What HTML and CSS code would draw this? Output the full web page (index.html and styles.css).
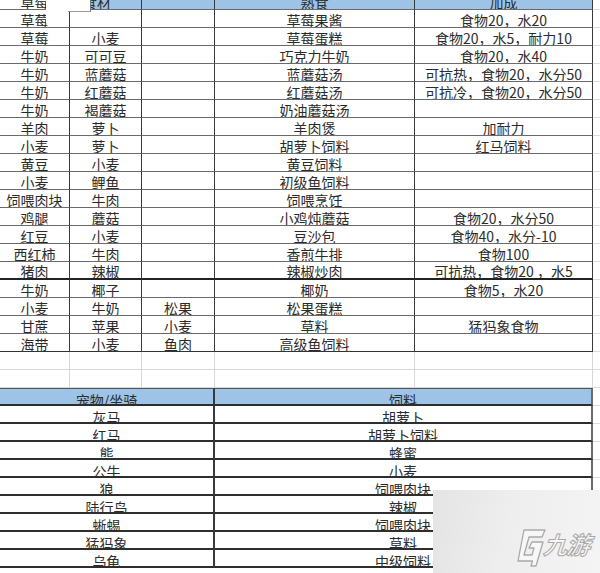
FILE: index.html
```html
<!DOCTYPE html>
<html lang="zh-CN">
<head>
<meta charset="utf-8">
<title>食材表</title>
<link rel="stylesheet" href="styles.css">
</head>
<body>
<div class="sheet">
  <div class="c">草莓</div><div class="c h hl">食材</div><div class="c h"></div><div class="c h">熟食</div><div class="c h">加成</div><div class="c x"></div>

  <div class="c">草莓</div><div class="c"></div><div class="c"></div><div class="c">草莓果酱</div><div class="c">食物20，水20</div><div class="c x"></div>
  <div class="c">草莓</div><div class="c">小麦</div><div class="c"></div><div class="c">草莓蛋糕</div><div class="c">食物20，水5，耐力10</div><div class="c x"></div>
  <div class="c">牛奶</div><div class="c">可可豆</div><div class="c"></div><div class="c">巧克力牛奶</div><div class="c">食物20，水40</div><div class="c x"></div>
  <div class="c">牛奶</div><div class="c">蓝蘑菇</div><div class="c"></div><div class="c">蓝蘑菇汤</div><div class="c">可抗热，食物20，水分50</div><div class="c x"></div>
  <div class="c">牛奶</div><div class="c">红蘑菇</div><div class="c"></div><div class="c">红蘑菇汤</div><div class="c">可抗冷，食物20，水分50</div><div class="c x"></div>
  <div class="c">牛奶</div><div class="c">褐蘑菇</div><div class="c"></div><div class="c">奶油蘑菇汤</div><div class="c"></div><div class="c x"></div>
  <div class="c">羊肉</div><div class="c">萝卜</div><div class="c"></div><div class="c">羊肉煲</div><div class="c">加耐力</div><div class="c x"></div>
  <div class="c">小麦</div><div class="c">萝卜</div><div class="c"></div><div class="c">胡萝卜饲料</div><div class="c">红马饲料</div><div class="c x"></div>
  <div class="c">黄豆</div><div class="c">小麦</div><div class="c"></div><div class="c">黄豆饲料</div><div class="c"></div><div class="c x"></div>
  <div class="c">小麦</div><div class="c">鲤鱼</div><div class="c"></div><div class="c">初级鱼饲料</div><div class="c"></div><div class="c x"></div>
  <div class="c">饲喂肉块</div><div class="c">牛肉</div><div class="c"></div><div class="c">饲喂烹饪</div><div class="c"></div><div class="c x"></div>
  <div class="c">鸡腿</div><div class="c">蘑菇</div><div class="c"></div><div class="c">小鸡炖蘑菇</div><div class="c">食物20，水分50</div><div class="c x"></div>
  <div class="c">红豆</div><div class="c">小麦</div><div class="c"></div><div class="c">豆沙包</div><div class="c">食物40，水分-10</div><div class="c x"></div>
  <div class="c">西红柿</div><div class="c">牛肉</div><div class="c"></div><div class="c">香煎牛排</div><div class="c">食物100</div><div class="c x"></div>
  <div class="c t">猪肉</div><div class="c t">辣椒</div><div class="c t"></div><div class="c t">辣椒炒肉</div><div class="c t">可抗热，食物20 ，水5</div><div class="c x"></div>
  <div class="c">牛奶</div><div class="c">椰子</div><div class="c"></div><div class="c">椰奶</div><div class="c">食物5，水20</div><div class="c x"></div>
  <div class="c">小麦</div><div class="c">牛奶</div><div class="c">松果</div><div class="c">松果蛋糕</div><div class="c"></div><div class="c x"></div>
  <div class="c">甘蔗</div><div class="c">苹果</div><div class="c">小麦</div><div class="c">草料</div><div class="c">猛犸象食物</div><div class="c x"></div>
  <div class="c l">海带</div><div class="c l">小麦</div><div class="c l">鱼肉</div><div class="c l">高级鱼饲料</div><div class="c l"></div><div class="c x"></div>

  <div class="c e"></div><div class="c e"></div><div class="c e"></div><div class="c e"></div><div class="c e"></div><div class="c x"></div>
  <div class="c e"></div><div class="c e"></div><div class="c e"></div><div class="c e"></div><div class="c e"></div><div class="c x"></div>

  <div class="c b h top s3">宠物/坐骑</div><div class="c b h top s2">饲料</div><div class="c x"></div>
  <div class="c b s3">灰马</div><div class="c b s2">胡萝卜</div><div class="c x"></div>
  <div class="c b s3">红马</div><div class="c b s2">胡萝卜饲料</div><div class="c x"></div>
  <div class="c b s3">熊</div><div class="c b s2">蜂蜜</div><div class="c x"></div>
  <div class="c b s3">公牛</div><div class="c b s2">小麦</div><div class="c x"></div>
  <div class="c b s3">狼</div><div class="c b s2">饲喂肉块</div><div class="c x"></div>
  <div class="c b s3">陆行鸟</div><div class="c b s2">辣椒</div><div class="c x"></div>
  <div class="c b s3">蜥蜴</div><div class="c b s2">饲喂肉块</div><div class="c x"></div>
  <div class="c b s3">猛犸象</div><div class="c b s2">草料</div><div class="c x"></div>
  <div class="c b s3">乌龟</div><div class="c b s2">中级饲料</div><div class="c x"></div>
</div>

<div class="patch"></div>

<div class="watermark">
  <svg class="wm-icon" width="32" height="42" viewBox="0 0 32 42">
    <path d="M9 2 L30 2 L27 9 L14 9 L9 27 L17 27 L19 20 L14 20 L17 14 L28 14 L21 38 L16 38 L17.5 33 L3 33 Z" fill="#f7f7f7" stroke="#a9a9a9" stroke-width="1.3" stroke-linejoin="round"/>
  </svg>
  <span class="wm-text">九游</span>
</div>
</body>
</html>
```
FILE: styles.css
```css
body {
  margin: 0;
  width: 600px;
  height: 573px;
  overflow: hidden;
  background: #ffffff;
  font-family: "Noto Sans CJK SC", "Noto Sans", sans-serif;
  font-size: 14px;
  color: #2b2b2b;
  position: relative;
}

.sheet {
  display: grid;
  grid-template-columns: 70px 72px 73px 200px 178px 7px;
  grid-auto-rows: 18px;
  margin-top: -8px;
}

.c {
  box-sizing: border-box;
  border-right: 1px solid #3a3a3a;
  border-bottom: 1px solid #6a6a6a;
  display: flex;
  align-items: center;
  justify-content: center;
  padding-top: 2px;
  line-height: 1;
  white-space: nowrap;
  overflow: hidden;
}

.h {
  background: #9dc3e6;
}

.hl {
  justify-content: flex-start;
  padding-left: 13px;
}

.t {
  border-bottom: 2px solid #222;
}

.l {
  border-bottom: 1px solid #333;
}

.x {
  border-right: none;
  border-bottom: 1px solid #dcdcdc;
}

.e {
  border-right: 1px solid #d8d8d8;
  border-bottom: 1px solid #d8d8d8;
}

.s3 {
  grid-column: span 3;
}

.s2 {
  grid-column: span 2;
}

.b {
  border-bottom: 2px solid #2e2e2e;
  border-right: 2px solid #3a3a3a;
  padding-top: 6px;
}

.top {
  border-top: 1px solid #555;
}

.s2.b {
  border-right: 2px solid #6a6a6a;
}

.patch {
  position: absolute;
  left: 46px;
  top: 0;
  width: 45px;
  height: 12px;
  background: #ffffff;
  border-right: 1px solid #777;
  border-bottom: 1px solid #999;
  box-sizing: border-box;
}

.patch::after {
  content: "";
  position: absolute;
  left: 0;
  top: 11px;
  width: 22px;
  height: 12px;
  background: #ffffff;
}

.watermark {
  position: absolute;
  left: 433px;
  top: 490px;
  width: 167px;
  height: 83px;
  background: linear-gradient(100deg, #e4e4e4 0%, #eeeeee 45%, #f4f4f4 100%);
}

.wm-icon {
  position: absolute;
  left: 82px;
  top: 38px;
}

.wm-text {
  position: absolute;
  left: 113px;
  top: 42px;
  font-size: 24px;
  font-weight: 700;
  line-height: 1;
  color: #f7f7f7;
  -webkit-text-stroke: 1px #a8a8a8;
  transform: skewX(-18deg);
  letter-spacing: -1px;
}
```
